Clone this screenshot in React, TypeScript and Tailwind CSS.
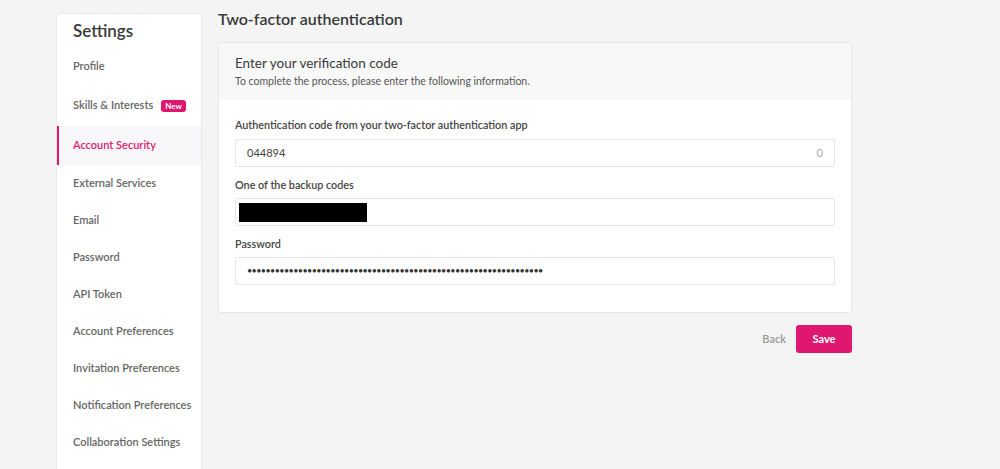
import React from "react";

const items = [
  "Profile",
  "Skills & Interests",
  "Account Security",
  "External Services",
  "Email",
  "Password",
  "API Token",
  "Account Preferences",
  "Invitation Preferences",
  "Notification Preferences",
  "Collaboration Settings",
];

const heights: Record<string, string> = {
  Profile: "h-[38px]",
  "Skills & Interests": "h-[41px]",
  "Account Security": "h-[39px]",
};

export default function App() {
  return (
    <div
      className="w-[1000px] h-[469px] overflow-hidden bg-[#f4f4f4] flex text-[#484848]"
      style={{ fontFamily: "Lato, 'Noto Sans', sans-serif" }}
    >
      <div className="ml-[56px] mt-[13px] w-[146px] bg-white border border-[#e8e8e8] rounded-t-[3px] self-start h-[470px]">
        <div className="pl-[16px] pt-[6px] text-[17px] font-semibold text-[#3a3a3a] h-[33px] leading-[22px]">Settings</div>
        <div className="flex flex-col">
          {items.map((it) => {
            const active = it === "Account Security";
            return (
              <div
                key={it}
                className={
                  (heights[it] ?? "h-[37px]") +
                  " flex items-center text-[11px] font-semibold " +
                  (active
                    ? "bg-[#f8f8fa] text-[#e0176f] border-l-2 border-[#e0176f] pl-[14px]"
                    : "text-[#666] pl-[16px]")
                }
              >
                {it}
                {it === "Skills & Interests" && (
                  <span className="ml-[8px] bg-[#e0176f] text-white text-[8px] font-bold rounded-[3px] px-[4px] py-[1px] leading-[10px]">
                    New
                  </span>
                )}
              </div>
            );
          })}
        </div>
      </div>
      <div className="ml-[16px] w-[634px]">
        <div className="h-[42px] pt-[9px] text-[16px] font-semibold text-[#3a3a3a] leading-[20px]">Two-factor authentication</div>
        <div className="bg-white border border-[#e6e6e6] rounded-[3px]">
          <div className="bg-[#f8f8f8] h-[57px] pl-[16px] pt-[11px]">
            <div className="text-[13.5px] text-[#3a3a3a] leading-[18px]">Enter your verification code</div>
            <div className="text-[10.5px] text-[#555] leading-[14px] mt-[2px]">
              To complete the process, please enter the following information.
            </div>
          </div>
          <div className="px-[16px] pt-[18px] pb-[27px] flex flex-col">
            <div className="text-[10.8px] font-semibold text-[#444] leading-[14px]">
              Authentication code from your two-factor authentication app
            </div>
            <div className="mt-[7px] h-[28px] border border-[#e6e6e6] rounded-[2px] flex items-center justify-between px-[11px] text-[11px] text-[#444]">
              <span>044894</span>
              <span className="text-[#aaa]">0</span>
            </div>
            <div className="mt-[11px] text-[10.8px] font-semibold text-[#444] leading-[14px]">One of the backup codes</div>
            <div className="mt-[6px] h-[28px] border border-[#e6e6e6] rounded-[2px] flex items-center px-[3px]">
              <div className="w-[128px] h-[19px] bg-black" />
            </div>
            <div className="mt-[11px] text-[10.8px] font-semibold text-[#444] leading-[14px]">Password</div>
            <div className="mt-[6px] h-[28px] border border-[#e6e6e6] rounded-[2px] flex items-center px-[11px] text-[9px] tracking-[-0.6px] text-[#333] overflow-hidden whitespace-nowrap">
              {"•".repeat(64)}
            </div>
          </div>
        </div>
        <div className="flex justify-end items-center mt-[12px]">
          <span className="text-[11px] text-[#999] font-semibold mr-[10px]">Back</span>
          <button className="w-[56px] h-[28px] bg-[#e0176f] text-white text-[11px] font-bold rounded-[3px]">Save</button>
        </div>
      </div>
    </div>
  );
}
